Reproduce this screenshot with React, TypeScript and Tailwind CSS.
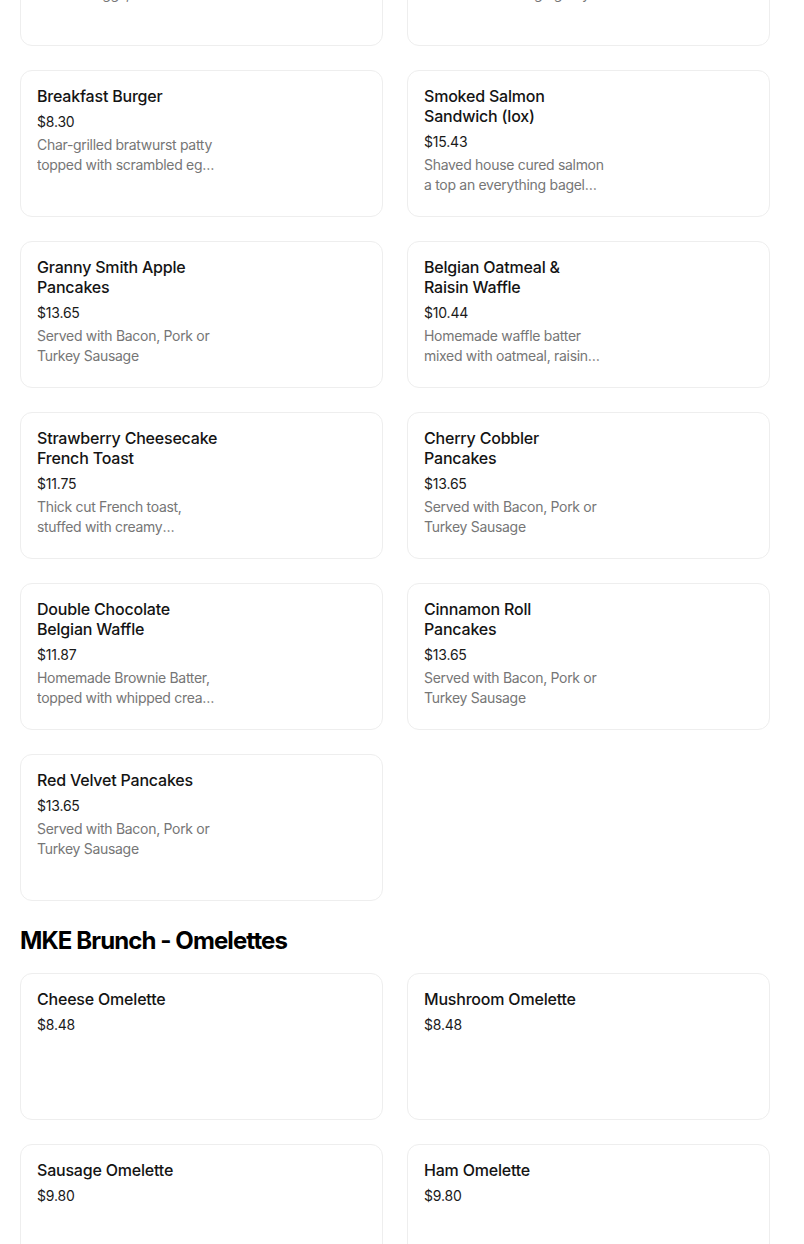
import React from "react";

type Item = { name: string; price: string; desc?: string };

const brunch: Item[] = [
  { name: "Steak & Eggs", price: "$16.95", desc: "Grilled sirloin steak served with two eggs, hash browns and toast" },
  { name: "Biscuits & Gravy", price: "$9.45", desc: "Buttermilk biscuits topped with house sausage gravy" },
  { name: "Breakfast Burger", price: "$8.30", desc: "Char-grilled bratwurst patty topped with scrambled egg, cheddar cheese and bacon" },
  { name: "Smoked Salmon Sandwich (lox)", price: "$15.43", desc: "Shaved house cured salmon a top an everything bagel with cream cheese" },
  { name: "Granny Smith Apple Pancakes", price: "$13.65", desc: "Served with Bacon, Pork or Turkey Sausage" },
  { name: "Belgian Oatmeal & Raisin Waffle", price: "$10.44", desc: "Homemade waffle batter mixed with oatmeal, raisins and cinnamon" },
  { name: "Strawberry Cheesecake French Toast", price: "$11.75", desc: "Thick cut French toast, stuffed with creamy cheesecake filling" },
  { name: "Cherry Cobbler Pancakes", price: "$13.65", desc: "Served with Bacon, Pork or Turkey Sausage" },
  { name: "Double Chocolate Belgian Waffle", price: "$11.87", desc: "Homemade Brownie Batter, topped with whipped cream and chocolate" },
  { name: "Cinnamon Roll Pancakes", price: "$13.65", desc: "Served with Bacon, Pork or Turkey Sausage" },
  { name: "Red Velvet Pancakes", price: "$13.65", desc: "Served with Bacon, Pork or Turkey Sausage" },
];

const omelettes: Item[] = [
  { name: "Cheese Omelette", price: "$8.48" },
  { name: "Mushroom Omelette", price: "$8.48" },
  { name: "Sausage Omelette", price: "$9.80" },
  { name: "Ham Omelette", price: "$9.80" },
];

function Card({ item }: { item: Item }) {
  return (
    <div className="h-[147px] rounded-xl border border-[#eeeeee] bg-white px-4 pt-[15px]">
      <div className="w-[182px]">
        <div className="text-[16px] leading-5 font-medium tracking-[-0.2px] text-[#141414]">{item.name}</div>
        <div className="mt-[6px] text-[14px] leading-5 tracking-[-0.2px] text-[#1a1a1a]">{item.price}</div>
        {item.desc && (
          <div className="mt-[3px] text-[14px] leading-5 tracking-[-0.3px] text-[#767676] line-clamp-2">{item.desc}</div>
        )}
      </div>
    </div>
  );
}

export default function App() {
  return (
    <div
      className="bg-white min-h-[1244px] overflow-hidden"
      style={{ fontFamily: "Inter, 'Noto Sans', sans-serif" }}
    >
      <div className="ml-5 w-[750px] mt-[-101px]">
        <div className="grid grid-cols-2 gap-6">
          {brunch.map((it) => (
            <Card key={it.name} item={it} />
          ))}
        </div>
        <h2 className="mt-6 mb-4 text-[24px] leading-8 font-bold tracking-[-0.9px] text-black">
          MKE Brunch - Omelettes
        </h2>
        <div className="grid grid-cols-2 gap-6">
          {omelettes.map((it) => (
            <Card key={it.name} item={it} />
          ))}
        </div>
      </div>
    </div>
  );
}
